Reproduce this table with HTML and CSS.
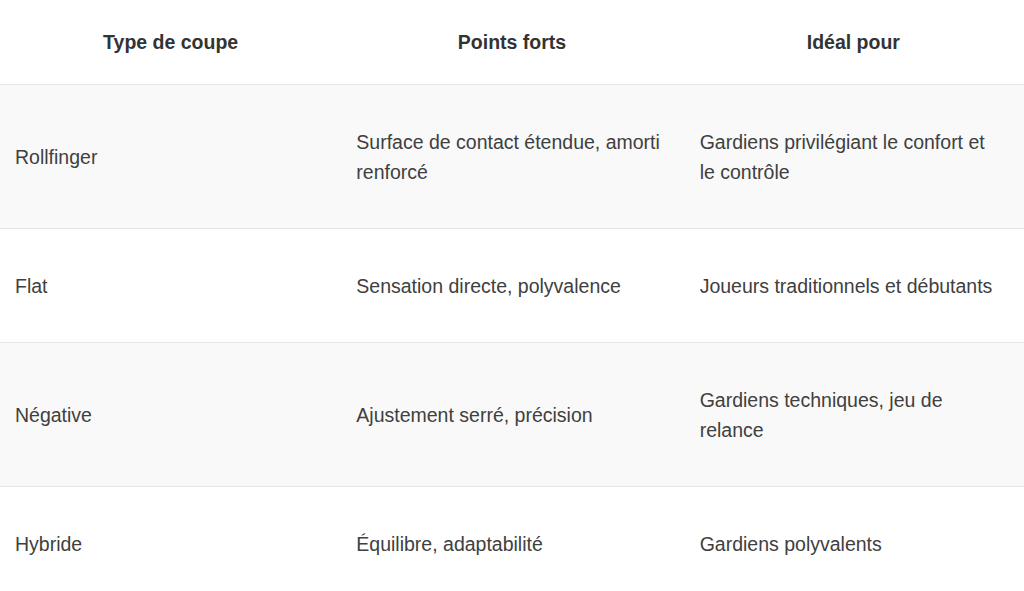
FILE: index.html
```html
<!DOCTYPE html>
<html lang="fr">
<head>
<meta charset="utf-8">
<link rel="stylesheet" href="styles.css">
</head>
<body>
<table class="cuts">
  <thead>
    <tr>
      <th>Type de coupe</th>
      <th>Points forts</th>
      <th>Idéal pour</th>
    </tr>
  </thead>
  <tbody>
    <tr class="alt">
      <td>Rollfinger</td>
      <td>Surface de contact étendue, amorti renforcé</td>
      <td>Gardiens privilégiant le confort et le contrôle</td>
    </tr>
    <tr>
      <td>Flat</td>
      <td>Sensation directe, polyvalence</td>
      <td>Joueurs traditionnels et débutants</td>
    </tr>
    <tr class="alt">
      <td>Négative</td>
      <td>Ajustement serré, précision</td>
      <td>Gardiens techniques, jeu de relance</td>
    </tr>
    <tr>
      <td>Hybride</td>
      <td>Équilibre, adaptabilité</td>
      <td>Gardiens polyvalents</td>
    </tr>
  </tbody>
</table>
</body>
</html>
```

FILE: styles.css
```css
html, body {
  margin: 0;
  padding: 0;
  background: #ffffff;
}
body {
  font-family: "Liberation Sans", Arial, sans-serif;
  color: #404040;
}
.cuts {
  width: 1024px;
  border-collapse: collapse;
  table-layout: fixed;
  font-size: 19.5px;
  line-height: 30px;
}
.cuts th {
  font-weight: bold;
  color: #333333;
  text-align: center;
  padding: 27px 15px;
  border-bottom: 1px solid #e6e6e6;
}
.cuts td {
  text-align: left;
  vertical-align: middle;
  padding: 41.5px 15px;
  border-bottom: 1px solid #e6e6e6;
}
.cuts td:last-child {
  padding-left: 17px;
  padding-right: 22px;
}
.cuts tr.alt td {
  background: #f9f9f9;
}
```
